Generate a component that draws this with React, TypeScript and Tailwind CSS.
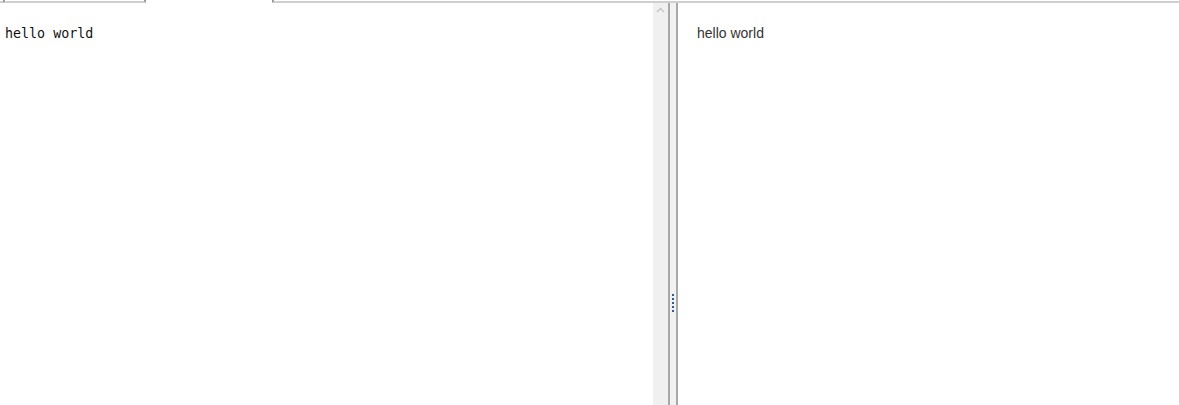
export default function App(): JSX.Element {
  return (
    <div className="w-[1179px] h-[405px] bg-white flex flex-col overflow-hidden">
      {/* tab strip, only the bottom edge shows */}
      <div className="flex h-[3px] shrink-0">
        <div className="w-[3px] border-b-2 border-[#cfcfcf]" />
        <div className="w-[143px] border-b-2 border-l-2 border-r-2 border-[#cfcfcf] border-l-[#9a9a9a] border-r-[#9a9a9a]" />
        <div className="w-[126px] bg-white" />
        <div className="flex-1 border-b-2 border-l-2 border-[#cfcfcf] border-l-[#9a9a9a]" />
      </div>

      <div className="flex flex-1 min-h-0">
        {/* editor */}
        <div className="w-[653px] pl-[5px] pt-[23px]">
          <pre
            className="text-[13.33px] leading-[16px] text-[#111]"
            style={{ fontFamily: '"DejaVu Sans Mono", "Liberation Mono", monospace' }}
          >
            hello world
          </pre>
        </div>

        {/* scrollbar */}
        <div className="w-[15px] bg-[#f0f0f0] flex justify-center pt-[4px]">
          <svg width="9" height="6" viewBox="0 0 9 6">
            <path d="M1 5 L4.5 1.5 L8 5" fill="none" stroke="#c4c4c4" strokeWidth="1.3" />
          </svg>
        </div>

        {/* splitter */}
        <div className="w-[10px] flex">
          <div className="w-[2px] bg-[#a8a8a8]" />
          <div className="w-[6px] bg-[#f2f2f2] flex flex-col items-center pt-[291px]">
            <div className="flex flex-col gap-[2px]">
              <div className="w-[2px] h-[2px] bg-[#2a5b9e]" />
              <div className="w-[2px] h-[2px] bg-[#2a5b9e]" />
              <div className="w-[2px] h-[2px] bg-[#2a5b9e]" />
              <div className="w-[2px] h-[2px] bg-[#2a5b9e]" />
              <div className="w-[2px] h-[2px] bg-[#2a5b9e]" />
            </div>
          </div>
          <div className="w-[2px] bg-[#a8a8a8]" />
        </div>

        {/* preview */}
        <div className="flex-1 pl-[19px] pt-[21px]">
          <p
            className="text-[14px] leading-[18px] text-[#333]"
            style={{ fontFamily: '"Liberation Sans", Arial, sans-serif' }}
          >
            hello world
          </p>
        </div>
      </div>
    </div>
  );
}
